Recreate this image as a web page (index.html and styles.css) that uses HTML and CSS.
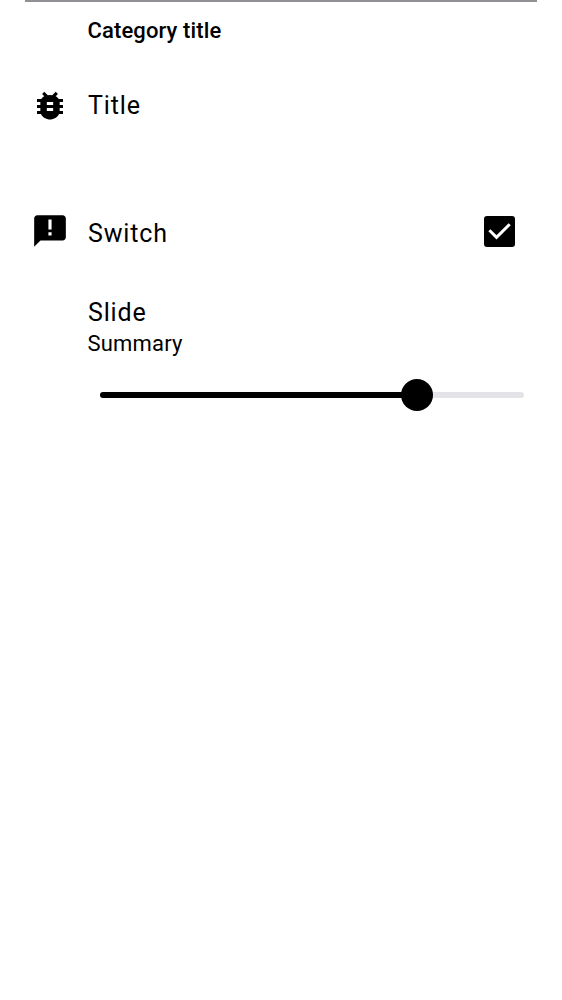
FILE: index.html
```html
<!DOCTYPE html>
<html lang="en">
<head>
<meta charset="utf-8">
<title>Settings</title>
<link rel="stylesheet" href="styles.css">
</head>
<body>
<main class="settings">
  <h2 class="category"><span class="label category-label">Category title</span></h2>
  <section class="row row-title">
    <svg class="icon" viewBox="0 0 24 24"><path d="M20.200 7.600h-2.700c-.4-.7-1.100-1.300-1.900-1.700L17 4.400 15.600 3l-2.200 2.200a6.500 6.500 0 0 0-2.800 0L8.400 3 7 4.400 8.400 5.900c-.8.400-1.500 1-1.900 1.700H3.800v1.900h2.100v1.900H3.800v1.900h2.100v1.900H3.800v1.900h2.500c1 2 3.200 3.500 5.700 3.500s4.700-1.500 5.700-3.500h2.500v-1.900h-2.100v-1.900h2.100v-1.900h-2.100V9.500h2.100zM14 15.200h-4v-1.900h4zm0-3.800h-4V9.500h4z"/></svg>
    <span class="label name title-label">Title</span>
  </section>
  <section class="row row-switch">
    <svg class="icon bubble" viewBox="0 0 24 24"><path d="M20 2H4c-1.100 0-1.990.9-1.990 2L2 22l4-4h14c1.100 0 2-.9 2-2V4c0-1.100-.9-2-2-2zm-7 12.800h-2v-2h2v2zm0-3.800h-2V4.800h2V11z"/></svg>
    <span class="label name switch-label">Switch</span>
    <svg class="check" viewBox="0 0 31 31"><rect width="31" height="31" rx="3"/><path class="tick" d="M5.400 14.300l7.100 7.100L25.700 8.200"/></svg>
  </section>
  <section class="slide">
    <span class="label name slide-label">Slide</span>
    <span class="label summary">Summary</span>
    <div class="track"><div class="fill"></div><div class="thumb"></div></div>
  </section>
</main>
</body>
</html>
```
FILE: styles.css
```css
body {
  margin: 0;
  background: #fff;
  color: #000;
  font-family: Roboto, sans-serif;
}

.settings {
  box-sizing: border-box;
  min-height: 1000px;
  margin: 0 25px;
  border-top: 2px solid #929095;
}

.label {
  white-space: nowrap;
}

.category {
  display: flex;
  margin: 0;
  padding: 14px 0 0 62.500px;
  height: 30px;
  font-size: 22px;
  line-height: 30px;
  font-weight: 500;
}

.category-label {
  letter-spacing: 0.120px;
}

.row {
  display: flex;
  align-items: center;
  padding-left: 6px;
}

.row-title {
  height: 60px;
  margin-top: 30px;
}

.row-switch {
  height: 60px;
  margin-top: 66px;
  padding-right: 22px;
}

.icon {
  width: 38px;
  height: 38px;
  flex: none;
}

.bubble {
  margin-bottom: 2px;
}

.name {
  margin-left: 19px;
  font-size: 25px;
  line-height: 32px;
  letter-spacing: 0.850px;
}

.title-label {
  padding-bottom: 1px;
}

.switch-label {
  padding-top: 3px;
}

.check {
  width: 31px;
  height: 31px;
  flex: none;
  margin-left: auto;
  margin-bottom: 1px;
}

.tick {
  fill: none;
  stroke: #fff;
  stroke-width: 3;
}

.slide {
  display: flex;
  flex-direction: column;
  padding: 35px 0 0 62.500px;
}

.slide .name {
  margin-left: 0.500px;
}

.summary {
  font-size: 22px;
  line-height: 30px;
  letter-spacing: 0.200px;
}

.track {
  display: flex;
  align-items: center;
  width: 424.500px;
  height: 6px;
  margin: 33px 0 0 12px;
  border-radius: 3px;
  background: #e4e3e8;
}

.fill {
  width: 317px;
  height: 6px;
  border-radius: 3px;
  background: #000;
}

.thumb {
  width: 32px;
  height: 32px;
  margin-left: -16px;
  border-radius: 50%;
  background: #000;
  flex: none;
}
```
